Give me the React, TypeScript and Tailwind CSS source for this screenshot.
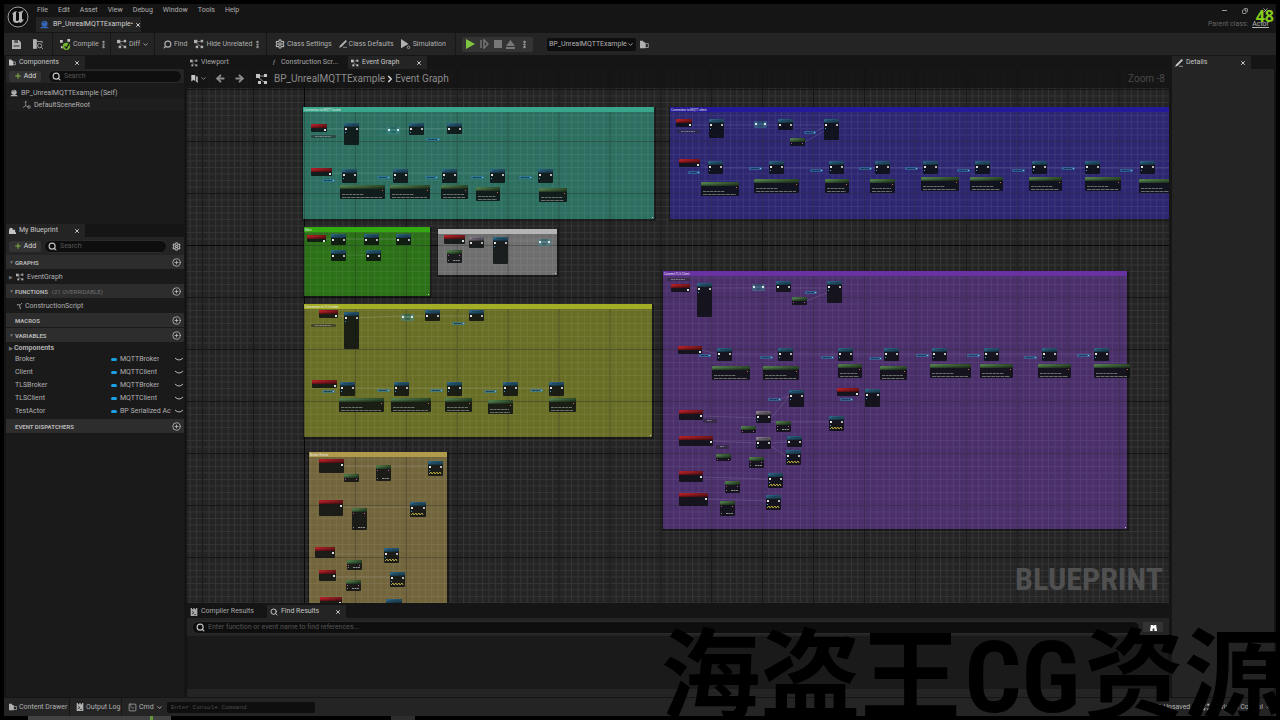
import type { ReactNode } from "react";
import {
  ArrowLeft,
  ArrowRight,
  ChevronDown,
  ChevronRight,
  CirclePlus,
  Copy,
  EllipsisVertical,
  Minus,
  Plus,
  Search,
  Settings,
  SquareTerminal,
  X,
} from "lucide-react";

type Kind = "event" | "fn" | "pure" | "format" | "print" | "macro" | "cast" | "get" | "ref";
type GraphNode = [kind: Kind, x: number, y: number, w: number, h: number];

interface Comment {
  title: string;
  x: number;
  y: number;
  w: number;
  h: number;
  header: string;
  body: string;
}

interface Variable {
  name: string;
  type: string;
}

// top left corner of the visible part of the graph
const VIEW = { x: 187, y: 69 };

const comments: Comment[] = [
  { title: "Connection to MQTT broker", x: 303, y: 107, w: 351, h: 112, header: "#37a68a", body: "#2c6f60" },
  { title: "Connection to MQTT client", x: 670, y: 107, w: 520, h: 112, header: "#261a9c", body: "#2d2771" },
  { title: "Main", x: 304, y: 227, w: 126, h: 69, header: "#33a810", body: "#2b6f17" },
  { title: "", x: 438, y: 229, w: 119, h: 46, header: "#b5b5b5", body: "#6e6e6e" },
  { title: "Connection to TLS broker", x: 304, y: 304, w: 348, h: 133, header: "#a3ad26", body: "#696e26" },
  { title: "Connect TLS Client", x: 663, y: 271, w: 464, h: 258, header: "#6832a3", body: "#4a2f6b" },
  { title: "Broker Events", x: 309, y: 452, w: 138, h: 180, header: "#b09a4c", body: "#72653c" },
];

const nodes: GraphNode[] = [
  // broker
  ["event", 311, 124, 16, 8], ["ref", 311, 135, 25, 3], ["fn", 344, 123, 15, 22], ["cast", 387, 127, 13, 7],
  ["fn", 409, 123, 15, 12], ["get", 426, 138, 14, 3], ["fn", 447, 123, 15, 11],
  ["event", 311, 168, 21, 8], ["get", 322, 179, 13, 3], ["fn", 342, 169, 15, 14], ["get", 377, 176, 13, 3],
  ["fn", 393, 169, 15, 14], ["get", 425, 176, 13, 3], ["fn", 442, 169, 15, 14], ["get", 471, 176, 13, 3],
  ["fn", 490, 169, 15, 14], ["get", 519, 176, 13, 3], ["fn", 538, 169, 15, 14],
  ["format", 340, 185, 45, 14], ["format", 390, 185, 40, 14], ["format", 441, 185, 27, 14],
  ["format", 476, 187, 24, 14], ["format", 539, 188, 28, 14],
  // main
  ["event", 307, 235, 19, 7], ["fn", 331, 234, 15, 11], ["fn", 364, 234, 15, 11], ["fn", 396, 234, 15, 11],
  ["fn", 331, 250, 15, 11], ["fn", 366, 250, 15, 11],
  ["event", 444, 235, 21, 9], ["macro", 469, 237, 15, 11], ["fn", 493, 237, 15, 27], ["pure", 447, 250, 15, 13],
  ["cast", 538, 239, 13, 7],
  // client
  ["event", 676, 119, 16, 8], ["ref", 677, 130, 23, 3], ["fn", 709, 119, 15, 19], ["cast", 754, 121, 13, 7],
  ["fn", 778, 119, 15, 11], ["get", 804, 131, 12, 3], ["pure", 790, 138, 15, 8], ["fn", 824, 119, 15, 21],
  ["event", 679, 159, 21, 8], ["get", 688, 171, 12, 3],
  ["fn", 708, 161, 15, 13], ["fn", 769, 161, 15, 13], ["fn", 829, 161, 15, 13], ["fn", 875, 161, 15, 13],
  ["fn", 923, 161, 15, 13], ["fn", 975, 161, 15, 13], ["fn", 1032, 161, 15, 13], ["fn", 1085, 161, 15, 13],
  ["fn", 1140, 161, 15, 13],
  ["get", 749, 167, 13, 3], ["get", 810, 169, 13, 3], ["get", 859, 167, 13, 3], ["get", 905, 167, 13, 3],
  ["get", 957, 169, 13, 3], ["get", 1012, 169, 13, 3], ["get", 1062, 167, 13, 3], ["get", 1120, 169, 13, 3],
  ["format", 701, 182, 38, 14], ["format", 754, 179, 45, 14], ["format", 825, 179, 24, 14],
  ["format", 870, 179, 25, 14], ["format", 921, 177, 38, 14], ["format", 970, 177, 33, 14],
  ["format", 1029, 177, 33, 14], ["format", 1085, 177, 36, 14], ["format", 1139, 179, 40, 14],
  // tls broker
  ["event", 319, 310, 19, 8], ["ref", 311, 324, 25, 3], ["fn", 344, 312, 15, 37], ["cast", 401, 314, 13, 7],
  ["fn", 425, 310, 15, 11], ["get", 452, 322, 13, 3], ["fn", 469, 310, 15, 11],
  ["event", 312, 380, 25, 8], ["get", 322, 390, 13, 3], ["fn", 340, 382, 15, 14], ["fn", 394, 382, 15, 14],
  ["fn", 447, 382, 15, 14], ["fn", 503, 382, 15, 14], ["fn", 549, 382, 15, 14],
  ["get", 377, 389, 13, 3], ["get", 430, 389, 13, 3], ["get", 484, 390, 13, 3], ["get", 530, 389, 13, 3],
  ["format", 339, 398, 45, 14], ["format", 391, 398, 40, 14], ["format", 445, 398, 27, 14],
  ["format", 488, 400, 25, 14], ["format", 549, 398, 27, 14],
  // tls client
  ["ref", 667, 278, 23, 3], ["event", 671, 284, 19, 8], ["fn", 697, 283, 15, 34], ["cast", 752, 284, 13, 7],
  ["fn", 776, 281, 15, 11], ["get", 805, 291, 12, 3], ["pure", 792, 297, 15, 8], ["fn", 827, 281, 15, 22],
  ["event", 678, 346, 24, 8], ["get", 699, 354, 12, 3], ["fn", 717, 348, 15, 13], ["fn", 778, 348, 15, 13],
  ["fn", 838, 348, 15, 13], ["fn", 884, 348, 15, 13], ["fn", 932, 348, 15, 13], ["fn", 984, 348, 15, 13],
  ["fn", 1042, 348, 15, 13], ["fn", 1094, 348, 15, 13],
  ["get", 760, 356, 13, 3], ["get", 821, 356, 13, 3], ["get", 869, 357, 13, 3], ["get", 916, 354, 13, 3],
  ["get", 967, 354, 13, 3], ["get", 1024, 356, 13, 3], ["get", 1077, 354, 13, 3],
  ["format", 712, 366, 38, 14], ["format", 763, 366, 36, 14], ["format", 838, 364, 24, 14],
  ["format", 880, 366, 27, 14], ["format", 930, 364, 41, 14], ["format", 980, 364, 33, 14],
  ["format", 1038, 364, 33, 14], ["format", 1094, 364, 36, 14],
  ["fn", 789, 390, 15, 17], ["get", 768, 398, 13, 3], ["event", 837, 388, 22, 8], ["fn", 865, 389, 15, 18],
  ["get", 840, 398, 13, 3],
  ["event", 679, 410, 24, 10], ["ref", 703, 419, 14, 4], ["macro", 756, 411, 15, 12], ["pure", 741, 426, 15, 7],
  ["pure", 776, 421, 15, 11], ["print", 829, 416, 15, 15],
  ["event", 679, 436, 34, 10], ["ref", 716, 445, 13, 4], ["macro", 756, 437, 15, 12], ["pure", 716, 454, 15, 7],
  ["pure", 749, 457, 15, 11], ["fn", 787, 436, 15, 11], ["print", 786, 450, 15, 15],
  ["event", 679, 471, 24, 11], ["pure", 725, 481, 15, 12], ["print", 768, 473, 15, 15],
  ["event", 679, 493, 29, 13], ["pure", 720, 501, 15, 15], ["print", 766, 495, 15, 15],
  // broker events
  ["event", 319, 459, 25, 14], ["pure", 344, 474, 15, 8], ["pure", 376, 465, 15, 16], ["print", 428, 461, 15, 15],
  ["event", 319, 500, 24, 16], ["pure", 352, 508, 15, 22], ["print", 410, 502, 16, 15],
  ["event", 315, 547, 20, 11], ["pure", 347, 560, 15, 10], ["print", 384, 548, 15, 15],
  ["event", 319, 570, 17, 11], ["pure", 346, 580, 15, 11], ["print", 390, 572, 15, 15],
  ["event", 320, 597, 22, 10], ["fn", 386, 599, 16, 10],
];

const wires = [
  "M327 129 H447", "M332 173 H538", "M326 239 H396", "M338 255 H366", "M465 241 H538",
  "M692 125 H824", "M805 142 L824 131", "M815 132 L824 127", "M700 164 L708 168 H1190",
  "M338 315 L355 318 L401 316 H469", "M337 386 L340 388 H549",
  "M690 288 H827", "M806 301 L827 293", "M702 350 L717 354 H1094", "M780 399 L789 396",
  "M703 416 L756 418", "M771 418 Q778 410 789 396", "M771 422 H829", "M713 441 L756 443",
  "M771 443 L787 442", "M771 446 L786 456", "M703 477 L768 479", "M708 499 L766 501",
  "M344 466 H428", "M343 507 H410", "M335 554 H384", "M336 577 H390",
];

const headerFill: Record<Kind, string> = {
  event: "url(#red)",
  fn: "url(#blue)",
  print: "url(#blue)",
  pure: "url(#green)",
  format: "url(#green)",
  macro: "url(#grey)",
  cast: "#3b8f9c",
  get: "#2f7fae",
  ref: "#26262b",
};

const variables: Variable[] = [
  { name: "Broker", type: "MQTTBroker" },
  { name: "Client", type: "MQTTClient" },
  { name: "TLSBroker", type: "MQTTBroker" },
  { name: "TLSClient", type: "MQTTClient" },
  { name: "TestActor", type: "BP Serialized Actor" },
];

const menus = ["File", "Edit", "Asset", "View", "Debug", "Window", "Tools", "Help"];

function NodeShape({ node }: { node: GraphNode }) {
  const [kind, x, y, w, h] = node;

  if (kind === "get") {
    return (
      <g>
        <rect x={x} y={y} width={w} height={h} rx="1" fill={headerFill.get} opacity="0.6" />
        <path d={`M${x + 2} ${y + 1.5} H${x + w - 3}`} stroke="#10283a" strokeDasharray="3 .5" opacity="0.7" />
        <rect x={x + w - 2} y={y + 1} width="1" height="1" fill="#7fc5e5" />
      </g>
    );
  }
  if (kind === "ref") {
    return (
      <g>
        <rect x={x} y={y} width={w} height={h} rx="1" fill={headerFill.ref} opacity="0.55" />
        <path d={`M${x + 4} ${y + 1.5} H${x + w - 5}`} stroke="#c5c5d0" strokeDasharray="2 .5" opacity="0.5" />
      </g>
    );
  }
  if (kind === "cast") {
    return (
      <g>
        <rect x={x} y={y} width={w} height={h} rx="1" fill={headerFill.cast} opacity="0.45" />
        <path d={`M${x + 3} ${y + 1} h7 M${x + 4} ${y + 5} h5`} stroke="#0f2b33" opacity="0.6" />
        <rect x={x + 1} y={y + 2} width="2" height="2" fill="#dde5e5" />
        <rect x={x + w - 3} y={y + 2} width="2" height="2" fill="#dde5e5" />
      </g>
    );
  }

  return (
    <g>
      <rect x={x} y={y} width={w} height={h} rx="1" fill="#0c0f10" opacity="0.85" />
      <rect x={x} y={y} width={w} height="4" rx="1" fill={headerFill[kind]} />
      <rect x={x} y={y} width={w} height="4" rx="1" fill="url(#shade)" />
      {kind === "event" && <rect x={x + w - 3} y={y + 5} width="2" height="2" fill="#ddd" />}
      {(kind === "fn" || kind === "macro" || kind === "print") && (
        <g>
          <path d={`M${x + 3} ${y + 1.5} h${w - 6}`} stroke="#0d2533" strokeDasharray="2 .5" opacity="0.4" />
          <rect x={x + 1} y={y + 5} width="2" height="2" fill="#e0e0e0" />
          <rect x={x + w - 3} y={y + 5} width="2" height="2" fill="#b5b5b5" />
          {h > 11 && <rect x={x + 1} y={y + 9} width="1" height="1" fill="#3da5dd" />}
        </g>
      )}
      {kind === "print" && (
        <path
          d={`M${x + 1} ${y + h - 2} l2 -2 l1 2 l2 -2 l1 2 l2 -2 l1 2 l2 -2 l1 2`}
          stroke="#b5a63a"
          fill="none"
        />
      )}
      {kind === "pure" && (
        <g>
          <rect x={x + 1} y={y + 5} width="1" height="1" fill="#b04fa0" />
          <rect x={x + w - 3} y={y + 5} width="1" height="1" fill="#c55fb5" />
          {h > 9 && (
            <path
              d={`M${x + 1} ${y + h - 2.5} h1 M${x + 6} ${y + h - 2.5} h7`}
              stroke="#8d8d8d"
              strokeDasharray="2 .5"
            />
          )}
        </g>
      )}
      {kind === "format" && (
        <g>
          <path d={`M${x + 2} ${y + 9.5} h${Math.min(w - 6, 22)}`} stroke="#8f958f" strokeDasharray="3 .6" opacity="0.7" />
          <path d={`M${x + 2} ${y + 12.5} h${w - 5}`} stroke="#8f958f" strokeDasharray="4 .6" opacity="0.7" />
          <rect x={x + w - 3} y={y + 5} width="1" height="1" fill="#d36d52" />
        </g>
      )}
    </g>
  );
}

function Gradient({ id, from, to }: { id: string; from: string; to: string }) {
  return (
    <linearGradient id={id} x1="0" y1="0" x2="1" y2="0">
      <stop offset="0" stopColor={from} />
      <stop offset="1" stopColor={to} />
    </linearGradient>
  );
}

function GraphCanvas() {
  return (
    <svg className="absolute inset-0 h-full w-full" aria-label="Event graph">
      <defs>
        <pattern id="minor" x="304" y="245" width="6.36" height="6.5" patternUnits="userSpaceOnUse">
          <path d="M.5 0 V6.5 M0 .5 H6.36" stroke="#353535" />
        </pattern>
        <pattern id="major" x="304" y="245" width="50.9" height="52" patternUnits="userSpaceOnUse">
          <path d="M.5 0 V52 M0 .5 H50.9" stroke="#151515" />
        </pattern>
        <pattern id="lines" x="304" y="245" width="6.36" height="6.5" patternUnits="userSpaceOnUse">
          <path d="M.5 0 V6.5 M0 .5 H6.36" stroke="#fff" opacity="0.07" />
        </pattern>
        <Gradient id="red" from="#b51f26" to="#6c161b" />
        <Gradient id="blue" from="#2d6888" to="#22485e" />
        <Gradient id="green" from="#527f4d" to="#2b4527" />
        <Gradient id="grey" from="#8f8290" to="#5d5560" />
        <linearGradient id="shade" x1="0" y1="0" x2="0" y2="1">
          <stop offset="0.4" stopColor="#000" stopOpacity="0" />
          <stop offset="1" stopColor="#000" stopOpacity="0.5" />
        </linearGradient>
      </defs>
      <g transform={`translate(${-VIEW.x} ${-VIEW.y})`}>
        <rect x="187" y="69" width="3000" height="2000" fill="#242424" />
        <rect x="187" y="69" width="3000" height="2000" fill="url(#minor)" />
        <rect x="187" y="69" width="3000" height="2000" fill="url(#major)" />
        <path d="M304.5 69 V2000 M187 245.5 H3000" stroke="#080808" />
        {comments.map((c) => (
          <g key={c.x + "-" + c.y}>
            <rect x={c.x - 1} y={c.y} width={c.w + 3} height={c.h + 2} fill="#000" opacity="0.35" />
            <rect x={c.x} y={c.y} width={c.w} height={c.h} fill={c.body} />
            <rect x={c.x} y={c.y} width={c.w} height={c.h} fill="url(#lines)" />
            <rect x={c.x} y={c.y} width={c.w} height={c.h} fill="url(#major)" opacity="0.35" />
            <rect x={c.x} y={c.y} width={c.w} height="5" fill={c.header} />
            <text x={c.x + 1} y={c.y + 4} fill="#e5e5e5" className="text-[3px]">
              {c.title}
            </text>
            <rect x={c.x + c.w - 2} y={c.y + c.h - 2} width="1" height="1" fill="#ccc" />
          </g>
        ))}
        {wires.map((d) => (
          <path key={d} d={d} fill="none" stroke="#d5d5e5" strokeWidth="1" opacity="0.15" />
        ))}
        {nodes.map((n) => (
          <NodeShape key={n.join("-")} node={n} />
        ))}
      </g>
    </svg>
  );
}

function GraphIcon({ className }: { className?: string }) {
  return (
    <svg viewBox="0 0 12 12" className={`shrink-0 ${className}`} fill="currentColor">
      <rect x="0" y="1" width="4" height="4" />
      <rect x="8" y="1" width="3" height="3" />
      <rect x="2" y="8" width="3" height="3" />
      <rect x="8" y="8" width="3" height="3" />
      <path d="M4 3 H8 M3 5 L8 9" stroke="currentColor" fill="none" strokeWidth=".7" />
    </svg>
  );
}

function SphereIcon({ className }: { className?: string }) {
  return (
    <svg viewBox="0 0 12 12" className={`shrink-0 ${className}`} fill="currentColor">
      <circle cx="6" cy="5" r="4" />
      <path d="M0 11 L2 9 H10 L12 11 Z" />
      <path d="M4 4 a2 2 0 0 1 3 -1" stroke="#1a1a1a" fill="none" />
    </svg>
  );
}

function PencilIcon() {
  return (
    <svg viewBox="0 0 12 12" className="size-2 shrink-0" fill="currentColor">
      <path d="M10 0 L12 2 L4 10 L0 12 L2 8 Z" />
      <path d="M6 11 H12" stroke="currentColor" />
    </svg>
  );
}

function LogIcon() {
  return (
    <svg viewBox="0 0 12 12" className="size-2 shrink-0" fill="currentColor">
      <path d="M1 0 H3 V2 H5 V0 H7 V2 H9 V0 H11 V12 H1 Z" />
      <path d="M3 5 L6 7 L3 9 M6 10 H9" stroke="#1a1a1a" fill="none" />
    </svg>
  );
}

function FolderIcon({ className }: { className?: string }) {
  return (
    <svg viewBox="0 0 12 12" className={`shrink-0 ${className}`} fill="currentColor">
      <path d="M0 1 H4 L5 3 H7 V11 H0 Z" />
      <rect x="7" y="5" width="4" height="5" fill="none" stroke="currentColor" />
    </svg>
  );
}

function SaveIcon() {
  return (
    <svg viewBox="0 0 12 12" className="size-[9px] shrink-0" fill="currentColor">
      <path d="M0 0 H9 L12 3 V12 H0 Z" />
      <path d="M3 0 H8 V4 H3 Z M2 7 H10 V9 H2 Z" fill="#555" />
    </svg>
  );
}

function BrowseIcon() {
  return (
    <svg viewBox="0 0 12 12" className="size-[10px] shrink-0" fill="none" stroke="currentColor">
      <path d="M0 1 H4 L5 3 H11 V5 M0 1 V11 H5" />
      <path d="M0 1 H4 V11 H0 Z" fill="currentColor" />
      <circle cx="8" cy="8" r="2.5" />
      <path d="M10 10 L12 12" />
    </svg>
  );
}

function UnrealLogo() {
  return (
    <svg viewBox="0 0 24 24" className="mt-px size-6 shrink-0">
      <circle cx="12" cy="12" r="10" fill="#0b0b0b" stroke="#a0a0a0" strokeWidth="1" />
      <path
        d="M6 9 Q8 6 11 6 Q10 7 10 8 V15 Q10 16 11 16 Q12 16 13 15 V8 Q12 7 12 7 Q15 7 18 5 Q16 7 16 9 V14 Q16 15 18 14 Q17 17 14 18 L13 17 Q12 18 11 18 Q7 18 7 15 V10 Q7 9 6 9 Z"
        fill="#b5b5b5"
      />
    </svg>
  );
}

function Tab({ icon, label, active, close, width }: {
  icon: ReactNode;
  label: string;
  active?: boolean;
  close?: boolean;
  width: string;
}) {
  return (
    <div className={`flex h-[13px] items-center gap-[3px] px-[3px] ${width} ${active ? "bg-[#242424] text-[#c5c5c5]" : "text-[#a8a8a8]"}`}>
      {icon}
      <span className="grow whitespace-nowrap">{label}</span>
      {close && (
        <button aria-label={`Close ${label}`} className="mr-[2px]">
          <X className="size-[6px]" strokeWidth={4} />
        </button>
      )}
    </div>
  );
}

function ToolButton({ icon, label }: { icon: ReactNode; label?: string }) {
  return (
    <button className="flex shrink-0 items-center gap-[2px]" aria-label={label ?? "Tool"}>
      {icon}
      {label}
    </button>
  );
}

function Section({ title, note, arrow = true }: { title: string; note?: string; arrow?: boolean }) {
  return (
    <div className="mb-px flex h-[14px] items-center bg-[#2d2d2d] pr-[3px] pl-[3px] text-[#b5b5b5]">
      <span className="w-[6px] text-[5px] text-[#777]">{arrow && "▼"}</span>
      <h3 className="text-[6px] font-bold">{title}</h3>
      {note && <span className="ml-1 text-[6px] text-[#707070]">{note}</span>}
      <button aria-label={`Add to ${title}`} className="ml-auto">
        <CirclePlus className="size-[9px] text-[#c5c5c5]" />
      </button>
    </div>
  );
}

function SearchBox({ label }: { label: string }) {
  return (
    <label className="flex h-[11px] min-w-0 grow items-center gap-[3px] rounded-full bg-[#0e0e0e] px-[3px] ring-1 ring-[#2b2b2b]">
      <Search className="size-[9px] shrink-0 text-[#c5c5c5]" strokeWidth={3} />
      <input
        aria-label={label}
        placeholder={label}
        className="w-full min-w-0 bg-transparent outline-none placeholder:text-[#555]"
      />
    </label>
  );
}

function AddButton() {
  return (
    <button className="flex h-[11px] w-8 shrink-0 items-center justify-center gap-[2px] rounded-xs bg-[#333] text-[#d5d5d5]">
      <Plus className="size-2 text-[#84b545]" strokeWidth={3} />
      Add
    </button>
  );
}

function Divider() {
  return <div className="h-full w-px shrink-0 bg-[#171717]" />;
}

function TitleBar() {
  return (
    <header className="flex h-7 pl-[2px]">
      <UnrealLogo />
      <div className="grow pl-[6px]">
        <nav className="flex h-[13px] items-center gap-[10px] pl-px">
          {menus.map((m) => (
            <button key={m}>{m}</button>
          ))}
        </nav>
        <div className="flex h-[15px] w-[105px] items-center gap-[2px] bg-[#242424] pl-1 text-[#d0d0d0]">
          <SphereIcon className="mr-[2px] size-[9px] text-[#3568bd]" />
          <span>BP_UnrealMQTTExample•</span>
          <X className="size-[6px] shrink-0" strokeWidth={4} />
        </div>
      </div>
      <div className="flex flex-col items-end pr-[7px]">
        <div className="flex h-[13px] items-center gap-[14px]">
          <button aria-label="Minimize"><Minus className="size-[7px]" strokeWidth={3} /></button>
          <button aria-label="Restore"><Copy className="size-[6px] -scale-x-100" strokeWidth={3} /></button>
          <button aria-label="Close"><X className="size-[7px]" strokeWidth={3} /></button>
        </div>
        <div className="flex h-[15px] items-center gap-1 text-[#656565]">
          Parent class:
          <a href="#actor" className="text-[#b5b5b5] underline">Actor</a>
        </div>
      </div>
    </header>
  );
}

function Toolbar() {
  return (
    <div className="flex h-[22px] items-center bg-[#242424]">
      <div className="flex w-[48px] shrink-0 items-center justify-between pr-[9px] pl-2">
        <ToolButton icon={<SaveIcon />} />
        <ToolButton icon={<BrowseIcon />} />
      </div>
      <Divider />
      <div className="flex w-[57px] shrink-0 items-center justify-between pr-[2px] pl-[7px]">
        <ToolButton
          label="Compile"
          icon={
            <svg viewBox="0 0 12 12" className="size-[11px]">
              <path d="M0 1 H3 V4 H0 Z M8 0 H11 V3 H8 Z M1 8 H3 V10 H1 Z" fill="#c5c5c5" />
              <circle cx="7" cy="8" r="4" fill="#73b52c" />
              <path d="M5 8 L7 10 L10 5" stroke="#1a1a1a" strokeWidth="1.4" fill="none" />
            </svg>
          }
        />
        <EllipsisVertical className="size-[9px] shrink-0" strokeWidth={4} />
      </div>
      <Divider />
      <div className="flex w-[43px] shrink-0 items-center gap-[2px] pl-[6px]">
        <ToolButton label="Diff" icon={<GraphIcon className="size-[10px]" />} />
        <ChevronDown className="size-[7px]" strokeWidth={3} />
      </div>
      <Divider />
      <div className="flex w-[111px] shrink-0 items-center gap-[7px] pl-2">
        <ToolButton label="Find" icon={<Search className="size-[9px] -scale-x-100" strokeWidth={3} />} />
        <ToolButton label="Hide Unrelated" icon={<GraphIcon className="size-[10px]" />} />
        <EllipsisVertical className="-ml-[6px] size-[9px] shrink-0" strokeWidth={4} />
      </div>
      <Divider />
      <div className="flex w-[188px] shrink-0 items-center gap-[7px] pl-2">
        <ToolButton label="Class Settings" icon={<Settings className="size-[10px]" strokeWidth={3} />} />
        <ToolButton label="Class Defaults" icon={<PencilIcon />} />
        <ToolButton
          label="Simulation"
          icon={
            <svg viewBox="0 0 12 12" className="size-[10px]" fill="currentColor">
              <path d="M0 0 L9 6 L0 11 Z" />
              <circle cx="9" cy="10" r="1.5" fill="none" stroke="currentColor" />
            </svg>
          }
        />
      </div>
      <Divider />
      <div className="ml-[6px] flex h-[15px] w-[71px] shrink-0 items-center justify-between rounded-xs bg-[#343434] px-1">
        <button aria-label="Play">
          <svg viewBox="0 0 9 10" className="h-[10px] w-[9px]"><path d="M0 0 L9 5 L0 10 Z" fill="#7fc540" /></svg>
        </button>
        <button aria-label="Step">
          <svg viewBox="0 0 9 10" className="h-[10px] w-[9px]">
            <path d="M1 1 V9 M4 1 L8 5 L4 9 Z" fill="none" stroke="#777" strokeWidth="1.4" />
          </svg>
        </button>
        <button aria-label="Stop" className="size-2 bg-[#777]" />
        <button aria-label="Eject">
          <svg viewBox="0 0 9 9" className="size-[9px]" fill="#777"><path d="M0 6 L4.5 0 L9 6 Z M0 7 H9 V9 H0 Z" /></svg>
        </button>
        <EllipsisVertical className="size-[9px]" strokeWidth={4} />
      </div>
      <div className="ml-[14px] flex h-[13px] w-[89px] shrink-0 items-center rounded-xs bg-[#0e0e0e] pr-[2px]">
        <select aria-label="Debug object" className="min-w-0 grow appearance-none pl-[2px] outline-none">
          <option>BP_UnrealMQTTExample</option>
        </select>
        <ChevronDown className="size-[7px] shrink-0" strokeWidth={3} />
      </div>
      <FolderIcon className="ml-1 size-[9px]" />
    </div>
  );
}

function LeftPanel() {
  return (
    <aside className="flex w-[178px] shrink-0 flex-col">
      <section className="flex h-[168px] flex-col">
        <Tab active close width="w-[79px]" label="Components" icon={<FolderIcon className="size-[7px]" />} />
        <div className="flex h-[14px] items-center gap-2 bg-[#242424] px-[3px]">
          <AddButton />
          <SearchBox label="Search" />
        </div>
        <ul className="grow bg-[#1a1a1a] pt-1">
          <li className="flex h-3 items-center gap-[3px] px-1">
            <SphereIcon className="size-2" />
            BP_UnrealMQTTExample (Self)
          </li>
          <li className="flex h-3 items-center gap-[3px] bg-[#1e1e1e] pl-[17px]">
            <svg viewBox="0 0 12 12" className="size-2" fill="none" stroke="currentColor">
              <path d="M4 1 V7 L0 10 M4 7 L8 9 M3 2 L4 0 L5 2" />
              <circle cx="9" cy="9" r="2" />
            </svg>
            DefaultSceneRoot
          </li>
        </ul>
      </section>
      <section className="flex grow flex-col bg-[#1a1a1a]">
        <div className="bg-[#151515]">
          <Tab
            active
            close
            width="w-[79px]"
            label="My Blueprint"
            icon={<svg viewBox="0 0 8 8" className="size-[7px] shrink-0" fill="currentColor"><path d="M1 1 H4 V3 H7 V6 H8 V8 H0 V4 Z" /></svg>}
          />
        </div>
        <div className="flex h-[18px] items-center gap-1 bg-[#242424] px-[3px]">
          <AddButton />
          <SearchBox label="Search" />
          <button aria-label="View options" className="pl-[2px]"><Settings className="size-[9px]" strokeWidth={3} /></button>
        </div>
        <Section title="GRAPHS" />
        <div className="flex h-[14px] items-center gap-[3px] pl-[3px]">
          <span className="w-1 text-[5px] text-[#777]">▶</span>
          <GraphIcon className="size-2" />
          EventGraph
        </div>
        <Section title="FUNCTIONS" note="(21 OVERRIDABLE)" />
        <div className="flex h-[14px] items-center gap-[2px] pl-[10px]">
          <svg viewBox="0 0 8 8" className="size-[7px]" fill="none" stroke="currentColor"><path d="M1 2 H4 L5 7 M5 2 L7 0" /></svg>
          ConstructionScript
        </div>
        <Section title="MACROS" arrow={false} />
        <Section title="VARIABLES" />
        <div className="flex h-[10px] items-center pl-[3px] font-bold">
          <span className="w-[5px] text-[5px] text-[#777]">▶</span>
          Components
        </div>
        <table className="mb-px w-full table-fixed">
          <tbody>
            {variables.map((v) => (
              <tr key={v.name} className="h-[13px]">
                <td className="w-[105px] p-0 pl-[9px]">{v.name}</td>
                <td className="p-0">
                  <div className="flex items-center gap-[3px]">
                    <span className="h-[3px] w-[6px] shrink-0 rounded-full bg-[#1aa0e5]" />
                    <span className="overflow-hidden whitespace-nowrap">{v.type}</span>
                  </div>
                </td>
                <td className="w-[13px] p-0 pl-1">
                  <svg viewBox="0 0 8 4" className="mb-[2px] h-1 w-2" fill="none" stroke="#b5b5b5"><path d="M0 1 Q4 5 8 1" /></svg>
                </td>
              </tr>
            ))}
          </tbody>
        </table>
        <Section title="EVENT DISPATCHERS" arrow={false} />
      </section>
    </aside>
  );
}

function CenterPanel() {
  return (
    <main className="flex min-w-0 grow flex-col">
      <div className="flex">
        <Tab width="w-[80px]" label="Viewport" icon={<GraphIcon className="size-2" />} />
        <Tab width="w-[81px]" label="Construction Scr..." icon={<i className="w-2 text-center font-['Liberation_Serif',serif]">f</i>} />
        <Tab active close width="w-[79px]" label="Event Graph" icon={<GraphIcon className="size-2" />} />
      </div>
      <div className="relative grow overflow-hidden bg-[#242424]">
        <GraphCanvas />
        <div className="relative flex h-[19px] items-center bg-[#111111cc] px-1 text-[#8c8c8c]">
          <svg viewBox="0 0 8 10" className="mr-[2px] h-2 w-[7px]" fill="#c5c5c5"><path d="M0 0 H5 V8 L3 6 L0 8 Z M6 2 H8 V10 L6 8 Z" /></svg>
          <ChevronDown className="mr-2 size-[7px]" strokeWidth={3} />
          <button aria-label="Back" className="mr-2"><ArrowLeft className="size-[11px]" strokeWidth={4} /></button>
          <button aria-label="Forward" className="mr-[11px]"><ArrowRight className="size-[11px]" strokeWidth={4} /></button>
          <GraphIcon className="mr-[6px] size-3 text-[#c5c5c5]" />
          <span className="text-[10px]">BP_UnrealMQTTExample</span>
          <ChevronRight className="size-[10px] text-[#d5d5d5]" strokeWidth={4} />
          <span className="text-[10px]">Event Graph</span>
          <span className="ml-auto text-[10px] text-[#484848]">Zoom -8</span>
        </div>
        <p className="absolute right-[6px] bottom-2 font-['Roboto_Condensed','Open_Sans_Condensed','Roboto',sans-serif] text-[32px] leading-8 font-bold text-[#505050]">
          BLUEPRINT
        </p>
      </div>
      <section className="mt-[2px] flex h-[92px] shrink-0 flex-col">
        <div className="flex">
          <Tab width="w-[80px]" label="Compiler Results" icon={<LogIcon />} />
          <Tab active close width="w-[79px]" label="Find Results" icon={<Search className="size-2 shrink-0" strokeWidth={3} />} />
        </div>
        <div className="flex h-[18px] items-center gap-1 bg-[#242424] px-[6px]">
          <SearchBox label="Enter function or event name to find references..." />
          <button aria-label="Find in blueprints" className="flex h-[10px] w-5 items-center justify-center bg-[#333]">
            <svg viewBox="0 0 8 8" className="size-[7px]" fill="#fff"><path d="M1 1 H3 L4 2 L5 1 H7 L8 8 H5 V5 H3 V8 H0 Z" /></svg>
          </button>
        </div>
        <div className="mx-px grow bg-[#1a1a1a]" />
        <div className="h-2 bg-[#242424]" />
      </section>
    </main>
  );
}

function StatusBar() {
  return (
    <footer className="flex h-[18px] shrink-0 items-center bg-[#242424] pl-[5px] whitespace-nowrap">
      <button className="flex w-[60px] items-center gap-[2px]"><FolderIcon className="size-2" />Content Drawer</button>
      <Divider />
      <button className="flex w-[51px] items-center gap-[2px] pl-[6px]"><LogIcon />Output Log</button>
      <Divider />
      <button className="flex w-[45px] items-center gap-[2px] pl-[6px]">
        <SquareTerminal className="size-[9px]" />
        Cmd
        <ChevronDown className="size-[7px]" strokeWidth={3} />
      </button>
      <input
        aria-label="Console command"
        placeholder="Enter Console Command"
        className="h-[11px] w-[148px] rounded-xs bg-[#0e0e0e] px-1 font-['Liberation_Mono',monospace] text-[6px] outline-none placeholder:text-[#4d4d4d]"
      />
      <div className="ml-auto flex items-center gap-3 pr-1">
        <span>1 Unsaved</span>
        <button className="flex items-center gap-[2px]"><GraphIcon className="size-2" />Revision Control<ChevronDown className="size-[7px]" /></button>
      </div>
    </footer>
  );
}

export default function App() {
  return (
    <div className="relative h-screen overflow-hidden bg-black pt-1 pr-1 pl-1 font-['Roboto',sans-serif] text-[7px] leading-[9px] text-[#b0b0b0]">
      <div className="flex h-full flex-col bg-[#151515]">
        <TitleBar />
        <div className="mt-px"><Toolbar /></div>
        <div className="mt-px mb-px flex min-h-0 grow gap-[3px] pr-[2px] pl-[2px]">
          <LeftPanel />
          <CenterPanel />
          <aside className="flex w-[102px] shrink-0 flex-col">
            <Tab active close width="w-[79px]" label="Details" icon={<PencilIcon />} />
            <div className="grow bg-[#242424]" />
          </aside>
        </div>
        <StatusBar />
        <div className="flex h-1 shrink-0 bg-black pl-6">
          <div className="w-[143px] bg-[#424242]">
            <div className="ml-[122px] h-full w-[3px] bg-[#65983a]" />
          </div>
          <div className="ml-[220px] w-6 bg-[#2d2d2d]" />
        </div>
      </div>
      <span className="absolute top-2 right-[6px] font-['Open_Sans',sans-serif] text-[16px] leading-4 font-bold text-[#86cc1c]">48</span>
      <p className="pointer-events-none absolute -right-1 -bottom-[6px] font-['Noto_Sans_CJK_SC',sans-serif] text-[100px] leading-[96px] font-bold whitespace-nowrap text-black">
        海盗王<span className="px-1 font-['Roboto_Condensed','Noto_Sans_CJK_SC',sans-serif]">CG</span>资源
      </p>
    </div>
  );
}
